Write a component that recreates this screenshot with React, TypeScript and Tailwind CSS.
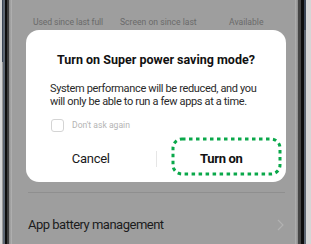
export default function App() {
  return (
    <div className="flex h-[244px] w-[311px] overflow-hidden bg-[#9e9e9e] font-['Roboto',sans-serif]">
      {/* left bezel */}
      <div className="w-[2px] bg-[#d6d6d6]" />
      <div className="flex w-[1px] flex-col">
        <div className="h-[62px] bg-[#3b4656]" />
        <div className="flex-1 bg-[#9a9a9a]" />
      </div>
      <div className="w-[2px] bg-[#5d6672]" />
      <div className="w-[2px] bg-[#0d0d0d]" />
      <div className="w-[2px] bg-[#3c3c3c]" />
      <div className="w-[3px] bg-gradient-to-r from-[#8d8d8d] to-[#b5b5b5]" />

      {/* screen */}
      <div className="flex flex-1 flex-col">
        <div className="flex h-[30px] items-end pb-[2px] text-[8.6px] leading-[12px] text-[#6a6a6a]">
          <span className="ml-[21px] w-[87px] whitespace-nowrap tracking-[-0.1px]">Used since last full</span>
          <span className="w-[109px] whitespace-nowrap">Screen on since last</span>
          <span className="whitespace-nowrap">Available</span>
        </div>

        <div className="ml-[14px] mr-[9px] flex h-[152px] flex-col rounded-[13px] bg-white">
          <div className="pt-[22px] text-center text-[12.5px] font-bold leading-[16px] text-[#111]">
            Turn on Super power saving mode?
          </div>
          <div className="mt-[14px] pl-[24px] text-[11px] leading-[13px] tracking-[-0.35px] text-[#2a2a2a]">
            <div className="whitespace-nowrap">System performance will be reduced, and you</div>
            <div className="whitespace-nowrap">will only be able to run a few apps at a time.</div>
          </div>
          <div className="mt-[11px] flex items-center pl-[25px]">
            <div className="h-[13px] w-[13px] rounded-[3px] border border-[#d4d4d4]" />
            <span className="ml-[8px] text-[8.6px] text-[#b4b4b4]">Don't ask again</span>
          </div>
          <div className="mt-[8px] flex h-[38px] items-center">
            <div className="flex flex-1 justify-center text-[13px] tracking-[-0.3px] text-[#1a1a1a]">Cancel</div>
            <div className="h-[16px] w-[1px] bg-[#e6e6e6]" />
            <div className="relative flex flex-1 justify-center text-[13px] font-bold tracking-[-0.3px] text-[#111]">
              Turn on
              <svg
                className="absolute left-[14px] top-[-12px]"
                width="112"
                height="40"
                viewBox="0 0 112 40"
              >
                <rect
                  x="2"
                  y="2"
                  width="107"
                  height="35"
                  rx="9"
                  fill="none"
                  stroke="#0aa84a"
                  strokeWidth="3"
                  strokeDasharray="3.5 3.5"
                />
              </svg>
            </div>
          </div>
        </div>

        <div className="ml-[16px] mr-[10px] mt-[10px] h-px bg-[#8f8f8f]" />

        <div className="ml-[16px] mr-[10px] mt-[22px] flex items-center justify-between">
          <span className="text-[13px] tracking-[-0.5px] text-[#1c1c1c]">App battery management</span>
          <svg width="8" height="12" viewBox="0 0 8 12">
            <path d="M1 1l5 5-5 5" fill="none" stroke="#b2b2b2" strokeWidth="1.2" />
          </svg>
        </div>
      </div>

      {/* right bezel */}
      <div className="w-[3px] bg-gradient-to-r from-[#b3b3b3] to-[#8a8a8a]" />
      <div className="w-[3px] bg-[#444]" />
      <div className="w-[3px] bg-[#0d0d0d]" />
      <div className="flex w-[2px] flex-col">
        <div className="h-[30px] bg-[#3b4656]" />
        <div className="flex-1 bg-[#5d6672]" />
      </div>
      <div className="w-[5px] bg-[#d6d6d6]" />
    </div>
  );
}
